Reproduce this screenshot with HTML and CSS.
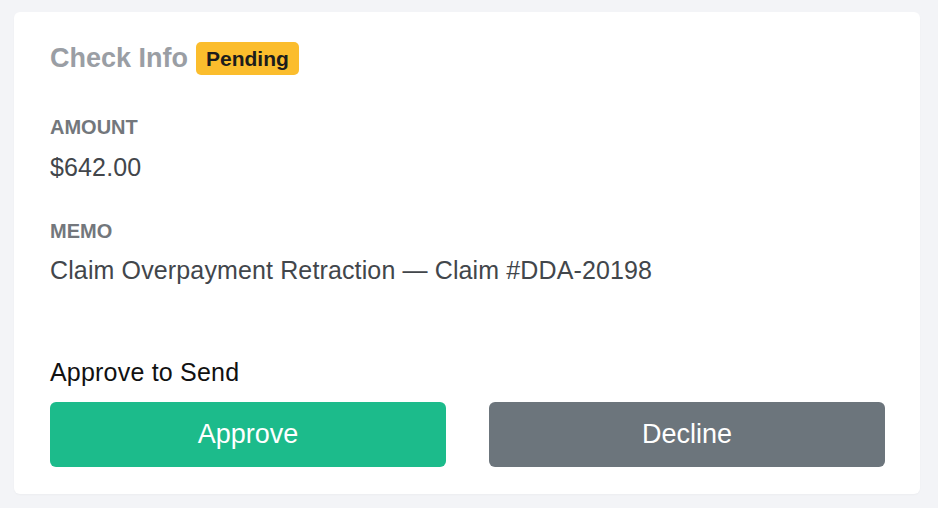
FILE: index.html
```html
<!DOCTYPE html>
<html lang="en">
<head>
    <meta charset="UTF-8">
    <title>Check Info</title>
    <link rel="stylesheet" href="styles.css">
</head>
<body>
    <div class="check-card">
        <div class="card-header">
            <h2 class="card-title">Check Info</h2>
            <span class="status-badge">Pending</span>
        </div>

        <div class="info-group info-amount">
            <div class="info-label">AMOUNT</div>
            <div class="info-value">$642.00</div>
        </div>

        <div class="info-group info-memo">
            <div class="info-label">MEMO</div>
            <div class="info-value">Claim Overpayment Retraction — Claim #DDA-20198</div>
        </div>

        <div class="approve-title">Approve to Send</div>
        <div class="action-row">
            <button class="action-btn approve-btn">Approve</button>
            <button class="action-btn decline-btn">Decline</button>
        </div>
    </div>
</body>
</html>
```

FILE: styles.css
```css
:root {
    --page-background: #f3f4f7;
    --card-background: #ffffff;
    --title-color: #9a9ea4;
    --label-color: #73777c;
    --value-color: #42464b;
    --approve-color: #1cbb8b;
    --decline-color: #6c757c;
}

* {
    margin: 0;
    padding: 0;
    box-sizing: border-box;
}

body {
    font-family: "Liberation Sans", Arial, sans-serif;
    background-color: var(--page-background);
    color: #111;
    padding: 12px 18px 14px 14px;
}

.check-card {
    background-color: var(--card-background);
    border-radius: 6px;
    box-shadow: 0 1px 2px rgba(0, 0, 0, 0.03);
    padding: 30px 35px 27px 36px;
}

.card-header {
    display: flex;
    align-items: center;
    gap: 8px;
    height: 33px;
}

.card-title {
    font-size: 27px;
    line-height: 30px;
    font-weight: 700;
    color: var(--title-color);
    margin-top: -2px;
}

.status-badge {
    background-color: #fbbd2d;
    color: #1c1c1c;
    font-size: 21px;
    font-weight: 700;
    border-radius: 5px;
    height: 33px;
    padding: 0 10px;
    display: flex;
    align-items: center;
}

.info-amount {
    margin-top: 40px;
}

.info-memo {
    margin-top: 37px;
}

.info-label {
    font-size: 20px;
    line-height: 24px;
    font-weight: 700;
    color: var(--label-color);
}

.info-value {
    font-size: 25px;
    line-height: 30px;
    letter-spacing: 0.13px;
    color: var(--value-color);
    margin-top: 13px;
}

.info-memo .info-value {
    margin-top: 12px;
}

.approve-title {
    font-size: 25px;
    line-height: 30px;
    margin-top: 72px;
    letter-spacing: 0.2px;
}

.action-row {
    display: flex;
    gap: 43px;
    margin-top: 15px;
}

.action-btn {
    flex: 1;
    height: 65px;
    border: none;
    border-radius: 6px;
    color: #fff;
    font-family: inherit;
    font-size: 27px;
    cursor: pointer;
}

.approve-btn {
    background-color: var(--approve-color);
}

.decline-btn {
    background-color: var(--decline-color);
}
```
